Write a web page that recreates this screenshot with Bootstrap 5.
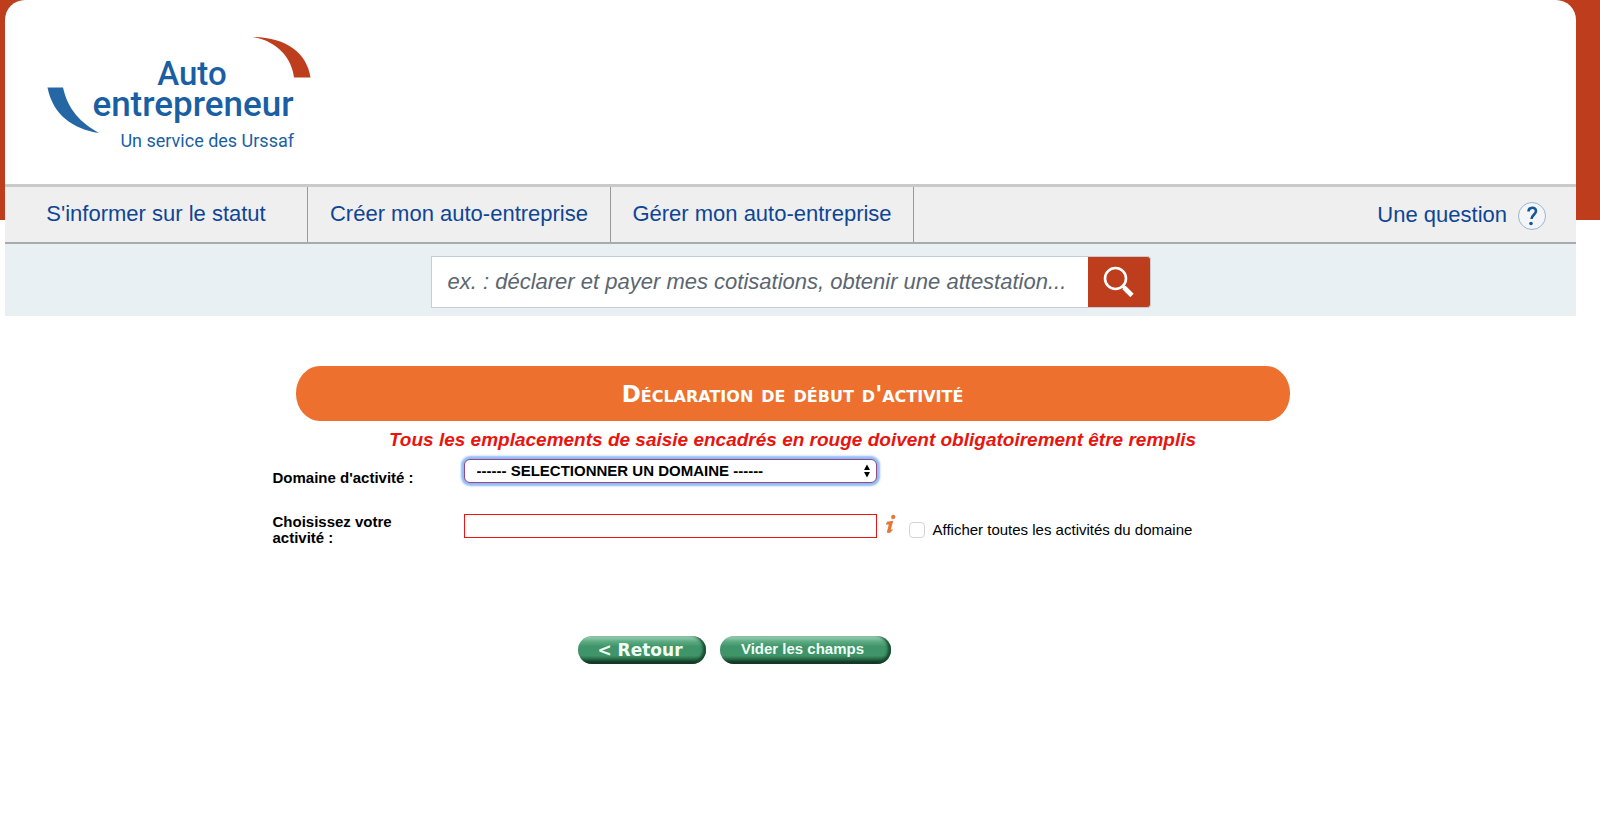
<!DOCTYPE html>
<html lang="fr">
<head>
<meta charset="utf-8">
<meta name="viewport" content="width=device-width, initial-scale=1">
<title>Auto-entrepreneur - Déclaration de début d'activité</title>
<link href="https://cdn.jsdelivr.net/npm/bootstrap@5.3.0/dist/css/bootstrap.min.css" rel="stylesheet">
<style>
  body { font-family: "Liberation Sans", Arial, sans-serif; color: #000; background: linear-gradient(#bd3d1d, #bd3d1d) 0 0 / 100% 220px no-repeat #fff; }
  .site { margin: 0 24px 0 5px; background: #fff; border-radius: 20px 20px 0 0; }
  .site-head { height: 184px; padding: 24px 35px; }
  .main-nav { background: #efefef; border-top: 3px solid #c8caca; border-bottom: 2px solid #a8abad; min-height: 60px; }
  .main-nav .nav-link { color: #0f4595; font-size: 22px; line-height: 54px; padding: 0; text-align: center; }
  .main-nav .tab-link { width: 303px; border-right: 1px solid #999; }
  .main-nav .help-link { padding-right: 29px; }
  .search-band { background: #e8f0f4; padding: 12px 16px; height: 72px; }
  .search-box { max-width: 720px; height: 52px; }
  .search-box .form-control { border: 1px solid #c4ced6; border-right: 0; border-radius: 0; padding: 0 4px 2px 16px; font-size: 22px; font-style: italic; }
  .search-box .form-control::placeholder { color: #5b6670; }
  .search-box .btn { width: 63px; background: #bd3d1d; border: 1px solid #c8ccd0; border-left: 0; border-radius: 0 4px 4px 0; padding: 0; }
  .form-zone { max-width: 1036px; padding-top: 50px; }
  .intro { margin: 0 19px 0 23px; text-align: center; }
  .banner { background: #ee702e; color: #fff; border-radius: 24px / 27px; font: bold 23px/53px "DejaVu Sans", Verdana, sans-serif; font-variant: small-caps; margin: 0; padding-top: 2px; }
  .notice { color: #e8150f; font-size: 19px; line-height: 24px; font-weight: bold; font-style: italic; margin: 7px 0; }
  .field-label { width: 191px; font-size: 15px; line-height: 16px; font-weight: bold; }
  .field-row { min-height: 27px; }
  .field-row .field-label { padding-top: 11px; }
  .field-row + .field-row { padding-top: 28px; }
  .field-row + .field-row .field-label { padding: 0 40px 0 0; }
  .field { width: 413px; height: 24px; border: 1px solid #f01410; border-radius: 0; padding: 0 12px; color: #000; }
  select.field { font-size: 15px; line-height: 20px; font-weight: bold; border-color: #94487c; border-radius: 6px; box-shadow: 0 0 2px 3px #8fbcf8;
    background: #fff url("data:image/svg+xml,%3Csvg xmlns='http://www.w3.org/2000/svg' viewBox='0 0 8 14'%3E%3Cpath d='M1 6l3-5.500 3 5.500zM1 8h6l-3 5.500z'/%3E%3C/svg%3E") right 5px center / 8px 14px no-repeat; }
  .show-all { font-size: 15px; line-height: 20px; margin: 6px 0 0 12px; }
  .show-all .form-check-input { width: 16px; height: 16px; margin: 0; border: 1px solid #d4d4d4; border-radius: 4px; }
  .actions { padding: 90px 112px 0 0; gap: 14px; }
  .pill { height: 28px; border: 0; border-radius: 14px; padding: 0; color: #effff6; background: linear-gradient(#a2d5bb 0, #5caa81 20%, #40946a 38%, #40946a 70%, #256443 84%, #06160e 100%); box-shadow: inset -3px -1px 3px #164a2e; font-weight: bold; }
  .pill-back { width: 128px; font: bold 17px/28px "DejaVu Sans", Verdana, sans-serif; padding-right: 4px; }
  .pill-clear { width: 171px; font-size: 15px; line-height: 24px; padding: 0 6px 3px 0; }
</style>
</head>
<body>
<div class="site">
  <header class="site-head">
    <a href="#" aria-label="Auto entrepreneur, un service des Urssaf">
      <svg width="280" height="136" viewBox="40 24 280 136" class="d-block">
        <path d="M252 37C286 37 307 53 310.500 77.500H294C292 59 278 41 252 37Z" fill="#bd3d1d"/>
        <path d="M47.500 87.500H63C68 110 81 123 99 133C73 129 53 115 47.500 87.500Z" fill="#2566a5"/>
        <g fill="#1a5fa3" font-family="Roboto, sans-serif">
          <text x="192" y="85" font-size="33" font-weight="500" text-anchor="middle">Auto</text>
          <text x="193" y="116" font-size="35" font-weight="500" text-anchor="middle">entrepreneur</text>
          <text x="294" y="147" font-size="18" font-weight="400" text-anchor="end">Un service des Urssaf</text>
        </g>
      </svg>
    </a>
  </header>
  <nav class="main-nav nav" aria-label="Navigation principale">
    <a class="nav-link tab-link" href="#">S'informer sur le statut</a>
    <a class="nav-link tab-link" href="#">Créer mon auto-entreprise</a>
    <a class="nav-link tab-link" href="#">Gérer mon auto-entreprise</a>
    <a class="nav-link help-link ms-auto d-flex align-items-center gap-2" href="#">Une question
      <svg width="32" height="32" viewBox="0 0 32 32" aria-hidden="true"><circle cx="17" cy="17" r="13.500" fill="#f4f5f7" stroke="#9db6d3"/><path d="M13.500 12.500c0-5 7.500-5 7.500-.5 0 3.500-4.500 4-4.500 8" fill="none" stroke="#155699" stroke-width="2.600"/><circle cx="16" cy="24.500" r="1.800" fill="#155699"/></svg>
    </a>
  </nav>
  <form class="search-band" role="search">
    <div class="search-box d-flex mx-auto">
      <input class="form-control" type="text" aria-label="Rechercher" placeholder="ex. : déclarer et payer mes cotisations, obtenir une attestation...">
      <button class="btn flex-shrink-0" type="button" aria-label="Lancer la recherche">
        <svg width="32" height="32" viewBox="0 0 32 32" fill="none" stroke="#fff"><circle cx="12.500" cy="12.500" r="10.500" stroke-width="2.600"/><path d="M19.500 20l2 2" stroke-width="3"/><path d="M21 21.500l8 8" stroke-width="4.600"/></svg>
      </button>
    </div>
  </form>
  <main class="form-zone mx-auto">
    <div class="intro">
      <h1 class="banner">Déclaration de début d'activité</h1>
      <p class="notice">Tous les emplacements de saisie encadrés en rouge doivent obligatoirement être remplis</p>
    </div>
    <form>
      <div class="field-row d-flex">
        <label class="field-label" for="domaine">Domaine d'activité :</label>
        <select class="field form-select" id="domaine"><option>------ SELECTIONNER UN DOMAINE ------</option></select>
      </div>
      <div class="field-row d-flex align-items-start">
        <label class="field-label" for="activite">Choisissez votre activité :</label>
        <input class="field" id="activite" type="text">
        <svg class="ms-2" width="12" height="20" viewBox="0 0 12 20" role="img" aria-label="Aide"><g fill="#c9b5a6"><circle cx="8" cy="3.500" r="2"/><path d="M1 9L7.500 8 5 16.500 8 16l-3 3H2L4 11H1z"/></g><g fill="#ea7434"><circle cx="8.300" cy="2.800" r="2"/><path d="M2 7.800L8.200 6.800 5.800 15.800 8.300 15 5 18.500H1.800L4 10H1.500z"/></g></svg>
        <div class="show-all d-flex align-items-center">
          <input class="form-check-input" type="checkbox" id="toutes">
          <label class="ms-2" for="toutes">Afficher toutes les activités du domaine</label>
        </div>
      </div>
      <div class="actions d-flex justify-content-center">
        <button class="pill pill-back" type="button">&lt; Retour</button>
        <button class="pill pill-clear" type="reset">Vider les champs</button>
      </div>
    </form>
  </main>
</div>
<script src="https://cdn.jsdelivr.net/npm/bootstrap@5.3.0/dist/js/bootstrap.bundle.min.js"></script>
</body>
</html>
